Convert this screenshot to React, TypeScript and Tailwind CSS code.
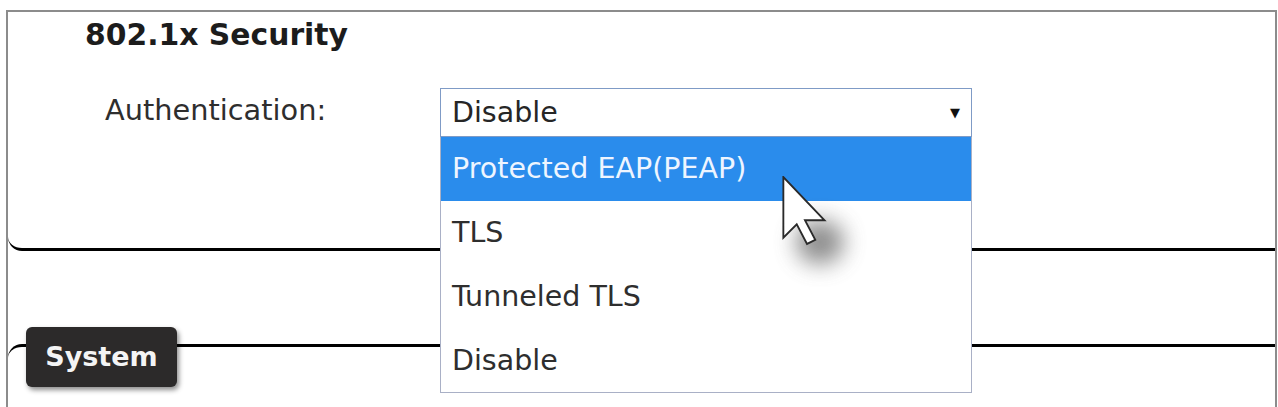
import React from "react";

const font = { fontFamily: '"DejaVu Sans", Verdana, sans-serif' };

function Cursor() {
  return (
    <div className="pointer-events-none absolute left-[782px] top-[176px] z-20">
      <div className="absolute left-[14px] top-[44px] h-[44px] w-[48px] rounded-full bg-[#5f5f5f] opacity-70 blur-[11px]" />
      <svg width="48" height="70" viewBox="0 0 46 68" className="relative">
        <path
          d="M1 1 L1 60 L14 47 L24 66 L32 62 L22 43 L41 43 Z"
          fill="#ffffff"
          stroke="#2a2a2a"
          strokeWidth="1.8"
          strokeLinejoin="miter"
        />
      </svg>
    </div>
  );
}

export default function App() {
  return (
    <div
      className="relative h-[407px] w-[1278px] overflow-hidden bg-white text-[#262626]"
      style={font}
    >
      <div className="ml-[6px] mt-[10px] h-[420px] w-[1271px] border-x-2 border-t-2 border-[#8c8c8c]">
        {/* Section 1 */}
        <div className="h-[239px] rounded-bl-[14px] border-b-[3px] border-black pl-[77px] pt-[6px]">
          <div className="text-[29.8px] font-bold leading-[34px] text-[#1c1c1c]">
            802.1x Security
          </div>
          <div className="mt-[36px] flex items-center">
            <div className="mb-[5px] ml-[20px] w-[335px] text-[28.8px] leading-[34px] text-[#2e2e2e]">
              Authentication:
            </div>
            <div className="relative z-10 w-[532px]">
              <div className="flex h-[49px] items-center justify-between border border-[#7f9bc6] bg-white pl-[11px] pr-[11px]">
                <span className="text-[28.5px] leading-[34px] text-[#262626]">Disable</span>
                <span className="text-[13px] text-[#111]">▼</span>
              </div>
              <div className="absolute left-0 top-full w-full border-x border-b border-[#a9b0c6] bg-white">
                <div className="flex h-[64px] items-center bg-[#2a8cec] pl-[11px] text-[28.5px] leading-[34px] text-[#eef5ff]">
                  Protected EAP(PEAP)
                </div>
                <div className="flex h-[64px] items-center pl-[11px] text-[28.5px] leading-[34px] text-[#2e2e2e]">TLS</div>
                <div className="flex h-[64px] items-center pl-[11px] text-[28.5px] leading-[34px] text-[#2e2e2e]">Tunneled TLS</div>
                <div className="flex h-[63px] items-center pl-[11px] text-[28.5px] leading-[34px] text-[#2e2e2e]">Disable</div>
              </div>
            </div>
          </div>
        </div>
        {/* Section 2 */}
        <div className="relative mt-[93px] h-[200px] rounded-tl-[14px] border-t-[3px] border-black">
          <div className="absolute left-[18px] top-[-20px] flex h-[60px] w-[151px] items-center justify-center rounded-[6px] bg-[#2c2a2a] text-[27px] font-bold text-[#f4f4f4] shadow-[2px_3px_5px_rgba(0,0,0,0.45)]">
            System
          </div>
        </div>
      </div>
      <Cursor />
    </div>
  );
}
